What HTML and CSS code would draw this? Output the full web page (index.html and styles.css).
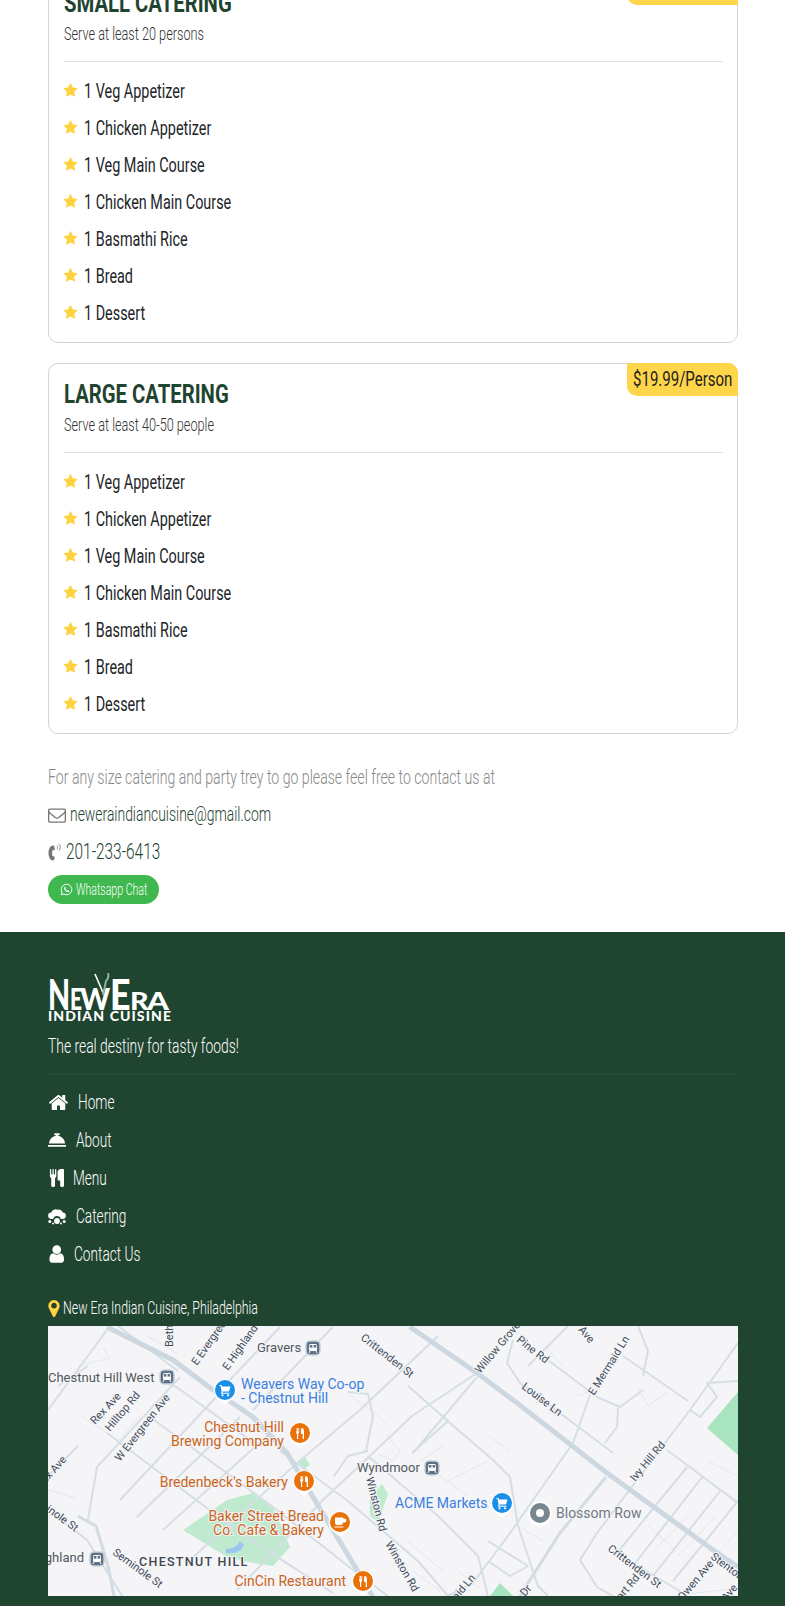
FILE: index.html
```html
<!DOCTYPE html>
<html lang="en">
<head>
  <meta charset="UTF-8" />
  <meta name="viewport" content="width=device-width, initial-scale=1.0"/>
  <title>Catering</title>
  <link rel="stylesheet" href="styles.css">
</head>
<body>
  <svg class="defs" width="0" height="0">
    <symbol id="i-star" viewBox="0 0 1792 1792"><path d="M1728 647q0 22-26 48l-363 354 86 500q1 7 1 20 0 21-10.5 35.5t-30.5 14.5q-19 0-40-12l-449-236-449 236q-22 12-40 12-21 0-31.5-14.5t-10.5-35.5q0-6 2-20l86-500-364-354q-25-27-25-48 0-37 56-46l502-73 225-455q19-41 49-41t49 41l225 455 502 73q56 9 56 46z"/></symbol>
    <symbol id="i-train" viewBox="0 0 16 16"><rect x="1" y="1" width="14" height="14" rx="4" fill="#5f7186" stroke="#c9d1da" stroke-width="1.5"/><rect x="4" y="4" width="8" height="7" rx="1.5" fill="#fff"/><rect x="4.8" y="5" width="2.6" height="2.6" fill="#5f7186"/><rect x="8.6" y="5" width="2.6" height="2.6" fill="#5f7186"/><path d="M5 11l-1 2M11 11l1 2" stroke="#fff" fill="none"/></symbol>
    <symbol id="i-pin-food" viewBox="0 0 24 28"><path d="M12 27l-5-4a11.500 11.500 0 1 1 10 0z" fill="#fff" opacity=".85"/><circle cx="12" cy="12" r="10" fill="#e8710a"/><path d="M8 7v4.500a1.300 1.300 0 0 0 1 1.200V18h1.200v-5.300a1.300 1.300 0 0 0 1-1.200V7h-.8v3.500h-.6V7h-.8v3.500h-.6V7zM14 7c1.500 0 2 2 2 4v7h-1.300v-5H13V9c0-1 .3-2 1-2z" fill="#fff"/></symbol>
    <symbol id="i-pin-cup" viewBox="0 0 24 28"><path d="M12 27l-5-4a11.500 11.500 0 1 1 10 0z" fill="#fff" opacity=".85"/><circle cx="12" cy="12" r="10" fill="#e8710a"/><path d="M7 7.500h8v5a2.500 2.500 0 0 1-2.500 2.500h-3A2.500 2.500 0 0 1 7 12.500zM15 8.500h1.500a1.500 1.500 0 0 1 0 4H15M6.500 16.500h9v1h-9z" fill="#fff"/></symbol>
    <symbol id="i-pin-shop" viewBox="0 0 24 28"><path d="M12 27l-5-4a11.500 11.500 0 1 1 10 0z" fill="#fff" opacity=".85"/><circle cx="12" cy="12" r="10" fill="#1a8fe8"/><path d="M6.500 7h2l.5 1.500h8.500l-1.500 5H9.800l-.3 1.200h7v1.100H8l.6-2.500L7.600 8H6.500z" fill="#fff"/><circle cx="9.500" cy="17.300" r="1.100" fill="#fff"/><circle cx="15" cy="17.300" r="1.100" fill="#fff"/></symbol>
  </svg>

  <main class="catering">
    <section class="package">
      <span class="price"><span class="nar">$14.99/Person</span></span>
      <h2><span class="nar">SMALL CATERING</span></h2>
      <p class="serve"><span class="nar">Serve at least 20 persons</span></p>
      <ul class="items">
        <li><svg class="star"><use href="#i-star"/></svg><span class="nar">1 Veg Appetizer</span></li>
        <li><svg class="star"><use href="#i-star"/></svg><span class="nar">1 Chicken Appetizer</span></li>
        <li><svg class="star"><use href="#i-star"/></svg><span class="nar">1 Veg Main Course</span></li>
        <li><svg class="star"><use href="#i-star"/></svg><span class="nar">1 Chicken Main Course</span></li>
        <li><svg class="star"><use href="#i-star"/></svg><span class="nar">1 Basmathi Rice</span></li>
        <li><svg class="star"><use href="#i-star"/></svg><span class="nar">1 Bread</span></li>
        <li><svg class="star"><use href="#i-star"/></svg><span class="nar">1 Dessert</span></li>
      </ul>
    </section>

    <section class="package">
      <span class="price"><span class="nar">$19.99/Person</span></span>
      <h2><span class="nar">LARGE CATERING</span></h2>
      <p class="serve"><span class="nar">Serve at least 40-50 people</span></p>
      <ul class="items">
        <li><svg class="star"><use href="#i-star"/></svg><span class="nar">1 Veg Appetizer</span></li>
        <li><svg class="star"><use href="#i-star"/></svg><span class="nar">1 Chicken Appetizer</span></li>
        <li><svg class="star"><use href="#i-star"/></svg><span class="nar">1 Veg Main Course</span></li>
        <li><svg class="star"><use href="#i-star"/></svg><span class="nar">1 Chicken Main Course</span></li>
        <li><svg class="star"><use href="#i-star"/></svg><span class="nar">1 Basmathi Rice</span></li>
        <li><svg class="star"><use href="#i-star"/></svg><span class="nar">1 Bread</span></li>
        <li><svg class="star"><use href="#i-star"/></svg><span class="nar">1 Dessert</span></li>
      </ul>
    </section>

    <div class="contact">
      <p class="contact-note"><span class="nar">For any size catering and party trey to go please feel free to contact us at</span></p>
      <p class="contact-line">
        <svg class="ic-mail" viewBox="0 0 1792 1792"><path d="M1664 1504v-768q-32 36-69 66-268 206-426 338-51 43-83 67t-86.5 48.5-102.5 24.5h-2q-48 0-102.5-24.5t-86.5-48.5-83-67q-158-132-426-338-37-30-69-66v768q0 13 9.500 22.500t22.500 9.500h1472q13 0 22.500-9.500t9.500-22.500zm0-1051v-24.500l-.5-13-3-12.500-5.500-9-9-7.500-14-2.500h-1472q-13 0-22.500 9.500t-9.500 22.500q0 168 147 284 193 152 401 317 6 5 35 29.500t46 37.500 44.500 31.500 50.500 27.500 43 9h2q20 0 43-9t50.500-27.500 44.500-31.500 46-37.500 35-29.500q208-165 401-317 54-43 100.500-115.500t46.500-131.500zm128-37v1088q0 66-47 113t-113 47h-1472q-66 0-113-47t-47-113v-1088q0-66 47-113t113-47h1472q66 0 113 47t47 113z"/></svg>
        <span class="nar">neweraindiancuisine@gmail.com</span>
      </p>
      <p class="contact-line phone">
        <svg class="ic-phone" viewBox="0 0 14 18"><path d="M5 2.500C2 3 .5 6 .5 10s1.500 7 4 7.500c.8.200 1.500-.3 1.700-1l.6-2.500-2.400-1.200C4 11.500 4 8.800 4.500 7.500l2.400-.7L6.400 3.500C6.200 2.800 5.700 2.400 5 2.500z"/><path d="M9 2.500c.8.800.8 2.700 0 3.500M11 1c1.600 1.600 1.600 5 0 6.500" fill="none" stroke="#777" stroke-width=".9"/></svg>
        <span class="nar">201-233-6413</span>
      </p>
      <a class="whatsapp" href="#">
        <svg class="ic-whatsapp" viewBox="0 0 16 16"><path d="M8 1.500a6.500 6.500 0 0 0-5.600 9.800L1.500 14.500l3.300-.9A6.500 6.500 0 1 0 8 1.500z" fill="none" stroke="#fff" stroke-width="1.200"/><path d="M5.800 4.800c-.8.600-1 1.600-.5 2.800.7 1.600 2 2.900 3.600 3.500 1.100.4 2 .1 2.500-.7.200-.4.200-.7 0-.9l-1.400-.7c-.2-.1-.4 0-.5.100l-.5.700c-1-.3-2-1.300-2.400-2.300l.5-.6c.1-.2.100-.3 0-.5l-.6-1.400c-.1-.2-.4-.3-.7-.2z" fill="#fff"/></svg>
        <span class="nar">Whatsapp Chat</span>
      </a>
    </div>
  </main>

  <footer class="site-footer">
    <div class="logo">
      <div class="logo-top">
        <span class="l-n">N</span><span class="l-e">E</span><span class="l-w">W</span><span class="l-e2">E</span><span class="l-r">R</span><span class="l-a">A</span>
        <svg class="logo-fork" viewBox="0 0 20 24"><path d="M3 1l9 21" stroke="#fff" stroke-width="1.600" fill="none"/><path d="M16 0c1 3 0 6-2 8l-3 14" stroke="#8fb09c" stroke-width="2" fill="none"/></svg>
      </div>
      <div class="logo-sub">INDIAN CUISINE</div>
    </div>
    <p class="tagline"><span class="nar">The real destiny for tasty foods!</span></p>

    <nav class="foot-nav">
      <a href="#"><svg class="ic-home" viewBox="0 0 1792 1792"><path d="M1472 992v480q0 26-19 45t-45 19h-384v-384h-256v384h-384q-26 0-45-19t-19-45v-480q0-1 .5-3t.5-3l575-474 575 474q1 2 1 6zm223-69l-62 74q-8 9-21 11h-3q-13 0-21-7l-692-577-692 577q-12 8-24 7-13-2-21-11l-62-74q-8-10-7-23.500t11-21.500l719-599q32-26 76-26t76 26l244 204v-195q0-14 9-23t23-9h192q14 0 23 9t9 23v408l219 182q10 8 11 21.500t-7 23.500z"/></svg><span class="nar">Home</span></a>
      <a href="#"><svg class="ic-bell" viewBox="0 0 18 16"><path d="M1 11.500A8 8 0 0 1 7.700 3.700V3H7a.8.8 0 0 1 0-1.700h4A.8.8 0 0 1 11 3h-.7v.7A8 8 0 0 1 17 11.500zM0 13h18v1.800H0z"/></svg><span class="nar">About</span></a>
      <a href="#"><svg class="ic-cutlery" viewBox="0 0 1600 1792"><path d="M832 64v640q0 61-35.500 111t-92.500 70v779q0 52-38 90t-90 38h-128q-52 0-90-38t-38-90v-779q-57-20-92.500-70t-35.500-111v-640q0-26 19-45t45-19 45 19 19 45v416q0 26 19 45t45 19 45-19 19-45v-416q0-26 19-45t45-19 45 19 19 45v416q0 26 19 45t45 19 45-19 19-45v-416q0-26 19-45t45-19 45 19 19 45zm768 0v1600q0 52-38 90t-90 38h-128q-52 0-90-38t-38-90v-512h-224q-13 0-22.500-9.500t-9.500-22.500v-800q0-132 94-226t226-94h256q26 0 45 19t19 45z"/></svg><span class="nar">Menu</span></a>
      <a href="#"><svg class="ic-cater" viewBox="0 0 18 16"><path d="M3.500 10.500A3.200 3.200 0 0 1 3.300 4 4.400 4.400 0 0 1 9.500 1.300 4 4 0 0 1 14.700 4 3.200 3.200 0 0 1 14.500 10.500H12.800A3.900 3.900 0 0 0 5.200 10.500z"/><circle cx="9" cy="12.500" r="2.900"/><circle cx="1.800" cy="13" r="1.500"/><circle cx="16.200" cy="13" r="1.500"/><circle cx="5" cy="15" r="1"/><circle cx="13" cy="15" r="1"/></svg><span class="nar">Catering</span></a>
      <a href="#"><svg class="ic-user" viewBox="0 0 1408 1536"><path d="M1408 1399q0 109-62.500 187t-150.500 78h-854q-88 0-150.500-78t-62.500-187q0-85 8.500-160.500t31.500-152 58.500-131 94-89 134.500-34.500q131 128 313 128t313-128q76 0 134.500 34.500t94 89 58.500 131 31.500 152 8.500 160.500zm-256-887q0 159-112.500 271.500t-271.500 112.500-271.500-112.500-112.500-271.500 112.500-271.500 271.500-112.500 271.500 112.500 112.500 271.500z" transform="translate(0 -128)"/></svg><span class="nar">Contact Us</span></a>
    </nav>

    <p class="location"><svg class="ic-marker" viewBox="0 0 1024 1536"><path d="M768 640q0-106-75-181t-181-75-181 75-75 181 75 181 181 75 181-75 75-181zm256 0q0 109-33 179l-364 774q-16 33-47.500 52t-67.500 19-67.500-19-46.500-52l-365-774q-33-70-33-179 0-212 150-362t362-150 362 150 150 362z" transform="translate(0 -128)"/></svg><span class="nar">New Era Indian Cuisine, Philadelphia</span></p>

    <svg class="map" viewBox="0 0 690 270" width="690" height="270">
      <rect width="690" height="270" fill="#f5f5f7"/>
      <!-- parks and water -->
      <path class="park" d="M135 204L179 174 205 167 225 181 242 221 225 240 200 236 179 231z"/>
      <path class="park-strong" d="M690 66L659 102 690 129z"/>
      <path class="park-strong" d="M442 270L452 257 465 270z"/>
      <path class="park" d="M250 136L256 130 262 138 256 144zM322 172L334 158 340 168 330 196 322 190z"/>
      <path class="water" d="M178 223q10 0 14-8l4 4q-4 10-18 8z"/>
      <!-- small streets -->
      <path class="lane" d="M0 164L28 172M34 90L70 115 92 90M30 40L62 32 55 22M100 10L130 28M300 68L325 85 340 100M338 108L352 125 345 135 330 128M395 120L372 135M400 155L440 135M385 145L420 170M440 110L462 125M497 20L515 40M530 70L555 60M590 62L600 80 620 66M660 135L690 150M605 225L640 190M630 230L668 190M650 250L690 205M640 268L690 262M600 200L625 222M470 200L495 215M360 215L395 245M365 245L392 265M410 245L432 262"/>
      <path class="street" d="M0 84L59 4M40 194L49 141 132 51M72 174L172 67M178 58L232 1M89 191L192 91M205 84L285 1M115 204L229 101M142 234L249 137 312 84 390 10M189 264L275 174 325 127 364 90 429 47M0 184L39 214 75 271M59 107L192 207 285 267M102 91L225 181 300 240 340 270M118 56L130 62 210 120M70 0L130 45M232 125L300 175 370 235 400 270M300 66L320 68 325 90 318 125M286 150L300 130 320 125M365 127L429 51M395 91L445 134 462 151 470 200 490 260 500 270M320 130L390 190 430 230 440 270M465 14L459 37 472 57 565 127M542 69L525 117 462 207 425 257 400 270M595 64L572 81 549 71 500 34M570 82L569 101 557 117M690 17L642 84 549 207 532 234 549 261 565 270M642 84L652 91 669 71 659 57 690 55M619 124L690 177M639 141L569 227M655 150L585 240M672 165L605 250M690 175L625 255M565 225L620 258 640 270M480 40L520 0M575 30L640 75M590 0L600 25 595 50M440 215L480 240 462 250 440 235M360 60L400 95 364 127M0 150L30 120M10 60L40 40"/>
      <path class="main-road" d="M59 1L125 34 165 64 205 91 239 127 265 171 309 244 325 271"/>
      <path class="main-road" d="M362 1L429 47 469 77 559 147 665 224 690 241"/>
      <path class="mid-road" d="M558 151L512 207 480 257 472 270"/>
      <path class="mid-road" d="M30 190L48 200 60 240 66 270"/>
      <!-- labels -->
      <g class="map-labels">
        <text x="0" y="56" class="stop">Chestnut Hill West</text>
        <text x="209" y="26" class="stop">Gravers</text>
        <text x="309" y="146" class="stop">Wyndmoor</text>
        <text x="36" y="236" class="stop" text-anchor="end">Highland</text>
        <text x="193" y="63" class="shop">Weavers Way Co-op</text>
        <text x="193" y="77" class="shop">- Chestnut Hill</text>
        <text x="347" y="182" class="shop">ACME Markets</text>
        <text x="236" y="106" class="food" text-anchor="end">Chestnut Hill</text>
        <text x="236" y="120" class="food" text-anchor="end">Brewing Company</text>
        <text x="240" y="161" class="food" text-anchor="end">Bredenbeck's Bakery</text>
        <text x="276" y="195" class="food" text-anchor="end">Baker Street Bread</text>
        <text x="276" y="209" class="food" text-anchor="end">Co. Cafe &amp; Bakery</text>
        <text x="298" y="260" class="food" text-anchor="end">CinCin Restaurant</text>
        <text x="508" y="192" class="poi">Blossom Row</text>
        <text x="91" y="240" class="area">CHESTNUT HILL</text>
        <text class="rd" transform="translate(64 228) rotate(36)">Seminole St</text>
        <text class="rd" transform="translate(27 206) rotate(36)" text-anchor="end">Seminole St</text>
        <text class="rd" transform="translate(19 134) rotate(-48)" text-anchor="end">Rex Ave</text>
        <text class="rd" transform="translate(47 99) rotate(-47)">Rex Ave</text>
        <text class="rd" transform="translate(62 106) rotate(-50)">Hilltop Rd</text>
        <text class="rd" transform="translate(72 136) rotate(-52)">W Evergreen Ave</text>
        <text class="rd" transform="translate(125 21) rotate(-90)">Bethlehem Pike</text>
        <text class="rd" transform="translate(149 40) rotate(-55)">E Evergreen Ave</text>
        <text class="rd" transform="translate(180 45) rotate(-55)">E Highland Ave</text>
        <text class="rd" transform="translate(312 13) rotate(38)">Crittenden St</text>
        <text class="rd" transform="translate(318 152) rotate(76)">Winston Rd</text>
        <text class="rd" transform="translate(337 218) rotate(60)">Winston Rd</text>
        <text class="rd" transform="translate(432 48) rotate(-50)">Willow Grove Ave</text>
        <text class="rd" transform="translate(468 15) rotate(38)">Pine Rd</text>
        <text class="rd" transform="translate(530 4) rotate(50)">Ave</text>
        <text class="rd" transform="translate(546 70) rotate(-58)">E Mermaid Ln</text>
        <text class="rd" transform="translate(473 62) rotate(37)">Louise Ln</text>
        <text class="rd" transform="translate(587 156) rotate(-50)">Ivy Hill Rd</text>
        <text class="rd" transform="translate(559 224) rotate(37)">Crittenden St</text>
        <text class="rd" transform="translate(662 232) rotate(37)">Stenton Ave</text>
        <text class="rd" transform="translate(666 238) rotate(-50)" text-anchor="end">Owen Ave</text>
        <text class="rd" transform="translate(592 252) rotate(-50)" text-anchor="end">Hart Rd</text>
        <text class="rd" transform="translate(690 262) rotate(-50)" text-anchor="end">Ave</text>
        <text class="rd" transform="translate(428 252) rotate(-50)" text-anchor="end">Mermaid Ln</text>
        <text class="rd" transform="translate(477 271) rotate(-50)">Dr</text>
      </g>
      <!-- markers -->
      <use href="#i-train" x="111" y="43" width="16" height="16"/>
      <use href="#i-train" x="257" y="14" width="16" height="16"/>
      <use href="#i-train" x="376" y="134" width="16" height="16"/>
      <use href="#i-train" x="41" y="225" width="16" height="16"/>
      <use href="#i-pin-shop" x="165" y="52" width="24" height="28"/>
      <use href="#i-pin-shop" x="442" y="165" width="24" height="28"/>
      <use href="#i-pin-food" x="240" y="95" width="24" height="28"/>
      <use href="#i-pin-food" x="244" y="143" width="24" height="28"/>
      <use href="#i-pin-cup" x="280" y="184" width="24" height="28"/>
      <use href="#i-pin-food" x="303" y="243" width="24" height="28"/>
      <path d="M492 203l-6-5a12 12 0 1 1 12 0z" fill="#fff"/>
      <circle cx="492" cy="187" r="10" fill="#78868f"/>
      <circle cx="492" cy="187" r="4" fill="#fff"/>
    </svg>
  </footer>
</body>
</html>
```

FILE: styles.css
```css
html, body {
  margin: 0;
  background: #fff;
}

body {
  font-family: Roboto, "Liberation Sans", sans-serif;
  color: #212529;
  height: 1606px;
  overflow: hidden;
}

.defs {
  position: absolute;
}

svg {
  flex: none;
}

/* no Oswald here, so Roboto gets squeezed to the same width */
.nar {
  display: inline-block;
  white-space: nowrap;
  transform: scaleX(var(--sx, .72));
  transform-origin: 0 50%;
}

.catering {
  padding: 0 47px 0 48px;
  margin-top: -28px;
}

.package {
  position: relative;
  border: 1px solid #d4d4d4;
  border-radius: 10px;
  padding: 12px 14px 11px 15px;
  margin-bottom: 20px;
}

.package h2 {
  margin: 0;
  font-size: 26px;
  line-height: 36px;
  font-weight: 700;
  color: #1f4430;
  --sx: .78;
}

.serve {
  margin: 0;
  font-size: 18px;
  line-height: 26px;
  font-weight: 300;
  color: #333;
  padding-bottom: 14px;
  border-bottom: 1px solid #e2e2e2;
  --sx: .705;
}

.price {
  position: absolute;
  top: -1px;
  right: -1px;
  width: 111px;
  height: 33px;
  line-height: 33px;
  padding-left: 6px;
  box-sizing: border-box;
  font-size: 21px;
  color: #222;
  background: #ffd54a;
  border-radius: 2px 10px 0 10px;
  --sx: .715;
}

.items {
  list-style: none;
  margin: 0;
  padding: 10px 0 0;
}

.items li {
  display: flex;
  align-items: center;
  height: 37px;
  font-size: 20px;
  color: #212529;
  --sx: .72;
}

.star {
  width: 15px;
  height: 15px;
  margin: 0 6px 0 -1px;
  fill: #ffd23f;
}

.contact {
  padding-top: 5px;
}

.contact p {
  margin: 0;
}

.contact-note {
  font-size: 20px;
  font-weight: 300;
  line-height: 37px;
  color: #888;
  --sx: .705;
}

.contact-line {
  display: flex;
  align-items: center;
  gap: 4px;
  font-size: 20px;
  font-weight: 300;
  line-height: 37px;
  color: #1f4430;
  --sx: .695;
}

.contact-line.phone {
  font-size: 22px;
  --sx: .7;
}

.ic-mail {
  width: 18px;
  height: 18px;
  fill: #777;
}

.ic-phone {
  width: 14px;
  height: 18px;
  fill: #777;
}

.whatsapp {
  display: inline-flex;
  align-items: center;
  gap: 3px;
  box-sizing: border-box;
  width: 111px;
  height: 29px;
  margin-top: 5px;
  padding-left: 12px;
  border-radius: 15px;
  background: #3fb94f;
  color: #fff;
  font-size: 16px;
  font-weight: 300;
  text-decoration: none;
  --sx: .66;
}

.ic-whatsapp {
  width: 13px;
  height: 13px;
}

.site-footer {
  margin-top: 28px;
  background: #1f4430;
  color: #fff;
  padding: 41px 48px 10px 48px;
  height: 680px;
  box-sizing: border-box;
}

.logo {
  width: 123px;
  color: #fff;
  font-family: Lato, "Liberation Sans", sans-serif;
  font-weight: 900;
}

.logo-top {
  position: relative;
  display: flex;
  align-items: flex-end;
  height: 37px;
}

/* each letter sits in a box of its own, the logo's letters differ in size */
.logo-top span {
  display: block;
  line-height: 1;
  transform-origin: 0 100%;
}

.l-n { width: 22px; font-size: 42px; transform: scaleX(.68); margin-bottom: -5px; }
.l-e { width: 10px; font-size: 30px; transform: scaleX(.7); margin-bottom: -3px; }
.l-w { width: 30px; font-size: 30px; transform: scaleX(.95); margin-bottom: -3px; }
.l-e2 { width: 20px; font-size: 42px; transform: scaleX(.85); margin-bottom: -5px; }
.l-r { width: 17px; font-size: 25px; transform: scaleX(1.15); margin-bottom: -3px; }
.l-a { width: 20px; font-size: 25px; transform: scaleX(1.25); margin-bottom: -3px; }

.logo-fork {
  position: absolute;
  left: 44px;
  top: 0;
  width: 20px;
  height: 24px;
}

.logo-sub {
  font-size: 14px;
  line-height: 12px;
  letter-spacing: 1.1px;
  white-space: nowrap;
}

.tagline {
  margin: 10px 0 0;
  padding-bottom: 14px;
  font-size: 21px;
  font-weight: 300;
  line-height: 28px;
  border-bottom: 1px solid #2a4f3b;
  --sx: .66;
}

.foot-nav {
  display: flex;
  flex-direction: column;
  padding-top: 8px;
}

.foot-nav a {
  display: flex;
  align-items: center;
  height: 38px;
  font-size: 21px;
  font-weight: 300;
  color: #fff;
  text-decoration: none;
  --sx: .65;
}

.foot-nav svg {
  fill: #fff;
}

.ic-home { width: 21px; height: 21px; margin-right: 9px; }
.ic-bell { width: 18px; height: 16px; margin-right: 10px; }
.ic-cutlery { width: 16px; height: 18px; margin-right: 9px; }
.ic-cater { width: 18px; height: 17px; margin-right: 10px; }
.ic-user { width: 16px; height: 18px; margin-right: 10px; }

.location {
  display: flex;
  align-items: center;
  gap: 3px;
  margin: 20px 0 0;
  font-size: 19px;
  font-weight: 300;
  line-height: 30px;
  --sx: .65;
}

.ic-marker {
  width: 12px;
  height: 17px;
  fill: #ffd23f;
}

.map {
  display: block;
  margin-top: 3px;
}

.park { fill: #c0ead0; }
.park-strong { fill: #a8e4bf; }
.water { fill: #9bc7ee; }

.lane, .street, .main-road, .mid-road {
  fill: none;
  stroke-linejoin: round;
}

.lane { stroke: #e4e8ec; stroke-width: 1; }
.street { stroke: #d6dee5; stroke-width: 2; }
.main-road { stroke: #ccd7e0; stroke-width: 5; }
.mid-road { stroke: #d3dbe3; stroke-width: 3; }

.map-labels text {
  font-family: Roboto, "Liberation Sans", sans-serif;
  stroke: #f5f5f7;
  stroke-width: 2px;
  paint-order: stroke;
}

.stop { font-size: 13px; fill: #50585f; }
.shop { font-size: 14px; fill: #3b7fdf; }
.food { font-size: 14px; fill: #c9641c; }
.poi { font-size: 14px; fill: #6f7a84; }
.area { font-size: 12.500px; letter-spacing: 1.300px; font-weight: 500; fill: #3f4750; }
.rd { font-size: 11px; fill: #3f4c5c; }
```
